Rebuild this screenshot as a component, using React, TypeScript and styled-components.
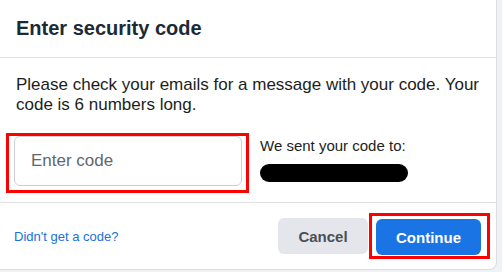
import React, { useState } from "react";
import styled, { createGlobalStyle } from "styled-components";

const GlobalStyle = createGlobalStyle`
  html, body {
    margin: 0;
    padding: 0;
    background: #f0f2f5;
    font-family: "Liberation Sans", Arial, sans-serif;
  }
`;

const Card = styled.div`
  width: 497px;
  height: 270px;
  box-sizing: border-box;
  background: #ffffff;
  border-right: 1px solid #dadde1;
  border-bottom: 1px solid #dadde1;
  border-bottom-right-radius: 8px;
  display: flex;
  flex-direction: column;
`;

const Header = styled.div`
  height: 58px;
  box-sizing: border-box;
  padding: 0 16px;
  display: flex;
  align-items: center;
  border-bottom: 1px solid #dddfe2;
`;

const Title = styled.h2`
  margin: 0;
  font-size: 20px;
  font-weight: bold;
  color: #1c2b33;
`;

const Body = styled.div`
  height: 145px;
  box-sizing: border-box;
  padding: 17px 6px 0 16px;
  border-bottom: 1px solid #dddfe2;
`;

const Message = styled.p`
  margin: 0;
  font-size: 17px;
  line-height: 20px;
  color: #1c1e21;
`;

const InputRow = styled.div`
  display: flex;
  align-items: flex-start;
  gap: 11px;
  margin: 18px 0 0 -10px;
`;

const Highlight = styled.div<{ $pad: string }>`
  border: 3px solid #ff0000;
  padding: ${(p) => p.$pad};
  display: flex;
`;

const CodeInput = styled.input`
  width: 228px;
  height: 50px;
  box-sizing: border-box;
  border: 1px solid #ccd0d5;
  border-radius: 6px;
  padding: 0 16px;
  font-family: "Liberation Sans", Arial, sans-serif;
  font-size: 17px;
  color: #1c1e21;
  outline: none;

  &::placeholder {
    color: #606770;
  }
`;

const SentInfo = styled.div`
  display: flex;
  flex-direction: column;
  gap: 10px;
  padding-top: 4px;
`;

const SentText = styled.span`
  font-size: 15px;
  line-height: 17px;
  color: #1c1e21;
`;

const Redacted = styled.div`
  width: 148px;
  height: 18px;
  border-radius: 9px;
  background: #000000;
`;

const Footer = styled.div`
  flex: 1;
  display: flex;
  align-items: center;
  padding: 0 6px 0 14px;
`;

const Link = styled.a`
  font-size: 13px;
  color: #216fdb;
  text-decoration: none;
  cursor: pointer;
`;

const Actions = styled.div`
  margin-left: auto;
  display: flex;
  align-items: center;
  gap: 1px;
`;

const Button = styled.button<{ $primary?: boolean }>`
  height: 36px;
  box-sizing: border-box;
  padding: 0 20px;
  border: none;
  border-radius: 6px;
  font-family: "Liberation Sans", Arial, sans-serif;
  font-size: 15px;
  font-weight: bold;
  cursor: pointer;
  background: ${(p) => (p.$primary ? "#1b74e4" : "#e4e6eb")};
  color: ${(p) => (p.$primary ? "#ffffff" : "#4b4f56")};
  width: ${(p) => (p.$primary ? "105px" : "90px")};
`;

const App: React.FunctionComponent = () => {
  const [code, setCode] = useState("");

  return (
    <>
      <GlobalStyle />
      <Card>
        <Header>
          <Title>Enter security code</Title>
        </Header>
        <Body>
          <Message>
            Please check your emails for a message with your code. Your code is 6 numbers long.
          </Message>
          <InputRow>
            <Highlight $pad="0 4px 4px 5px">
              <CodeInput
                placeholder="Enter code"
                value={code}
                onChange={(e) => setCode(e.target.value)}
              />
            </Highlight>
            <SentInfo>
              <SentText>We sent your code to:</SentText>
              <Redacted />
            </SentInfo>
          </InputRow>
        </Body>
        <Footer>
          <Link>Didn't get a code?</Link>
          <Actions>
            <Button>Cancel</Button>
            <Highlight $pad="3px 6px 1px 4px">
              <Button $primary>Continue</Button>
            </Highlight>
          </Actions>
        </Footer>
      </Card>
    </>
  );
};

export default App;
